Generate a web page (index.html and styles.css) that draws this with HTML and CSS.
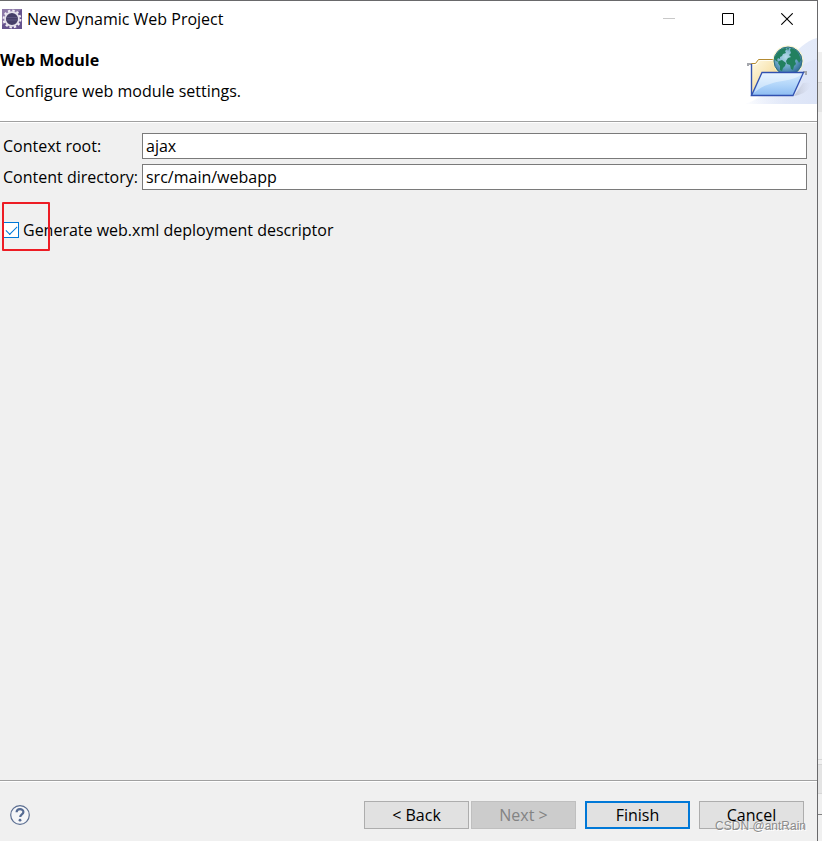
FILE: index.html
```html
<!DOCTYPE html>
<html lang="en">
<head>
<meta charset="utf-8">
<title>New Dynamic Web Project</title>
<link rel="stylesheet" href="styles.css">
</head>
<body>
<form class="dialog">
  <header class="titlebar">
    <svg width="20" height="20" viewBox="0 0 20 20" aria-hidden="true">
      <rect width="20" height="20" fill="#66538e"/>
      <path d="M0 0h20L0 16z" fill="#8d7aa8"/>
      <circle cx="10" cy="10" r="8.400" fill="none" stroke="#f2eff5" stroke-width="2" stroke-dasharray="2.400 2"/>
      <circle cx="10" cy="10" r="6.900" fill="#463f68" stroke="#e6e2ec" stroke-width="1.800"/>
      <path d="M4.500 8.500h11M4.200 11h11.600" stroke="#5d5680"/>
    </svg>
    <h1 class="title">New Dynamic Web Project</h1>
    <div class="controls">
      <button type="button" class="control" aria-label="Minimize" disabled><svg width="12" height="12" viewBox="0 0 12 12"><path d="M0 5.500h12" stroke="#c8c8c8"/></svg></button>
      <button type="button" class="control" aria-label="Maximize"><svg width="12" height="12" viewBox="0 0 12 12"><path d="M.5.5h11v11H.5z" fill="none" stroke="#000"/></svg></button>
      <button type="button" class="control" aria-label="Close"><svg width="12" height="12" viewBox="0 0 12 12"><path d="M.3.3l11.400 11.400M11.700.3L.3 11.700" stroke="#000" stroke-width="1.100"/></svg></button>
    </div>
  </header>
  <section class="banner">
    <div>
      <h2 class="heading">Web Module</h2>
      <p class="message">Configure web module settings.</p>
    </div>
    <svg width="77" height="67" viewBox="0 0 77 67" aria-hidden="true">
      <defs>
        <linearGradient id="haze" x1="0" x2="1"><stop offset="0" stop-color="#e6ecfa" stop-opacity="0"/><stop offset=".6" stop-color="#e6ecfa"/><stop offset="1" stop-color="#e3eaf9"/></linearGradient>
        <linearGradient id="base" x1="0" x2="1"><stop offset="0" stop-color="#dfe6f8" stop-opacity="0"/><stop offset="1" stop-color="#dce4f7"/></linearGradient>
        <linearGradient id="back" x1="0" y1="0" x2="1" y2="1"><stop offset="0" stop-color="#fffbe8"/><stop offset="1" stop-color="#efc96f"/></linearGradient>
        <linearGradient id="front" x1="0" y1="0" x2="0" y2="1"><stop offset="0" stop-color="#d8ecff"/><stop offset=".5" stop-color="#b4d7fa"/><stop offset="1" stop-color="#8dbcf2"/></linearGradient>
        <radialGradient id="sea" cx=".42" cy=".35" r=".65"><stop offset="0" stop-color="#b4dbe8"/><stop offset=".6" stop-color="#69a4c4"/><stop offset="1" stop-color="#2f6b98"/></radialGradient>
        <linearGradient id="shade" x1="0" x2="1"><stop offset="0" stop-color="#a9abb9" stop-opacity=".6"/><stop offset="1" stop-color="#c9cfdf" stop-opacity="0"/></linearGradient>
      </defs>
      <path d="M4 67C34 60 48 8 77 1v66z" fill="url(#haze)"/>
      <path d="M4 67C34 60 50 28 77 22v45z" fill="url(#base)"/>
      <path d="M54 59l9-13q10-2 8 3-5 8-17 10z" fill="url(#shade)"/>
      <path d="M8 29v-2h4M17 38v-2h4M63 35h3v3" fill="none" stroke="#a5a7ad" stroke-width="2"/>
      <path d="M11.500 58V26.500h4l3-4h16l3 4h5v31z" fill="url(#back)" stroke="#b38a31"/>
      <path d="M12.500 27.500h4l3-4h14" fill="none" stroke="#fffdf2"/>
      <path d="M11.500 59V27" stroke="#3454ae" stroke-width="1.400"/>
      <circle cx="48" cy="24" r="15.500" fill="#f6f1bd" opacity=".75"/>
      <circle cx="48" cy="24" r="14" fill="url(#sea)" stroke="#2f6f80"/>
      <path d="M36 18q3-6 9-7l2 1-2 2 1 2-3 1-1 2-2 1 0 2-2-1-1 2 2 2-3-1-2-3zM39 24l3-1 4 3-1 3-2 2-1 3-2-1 0-4-2-3zM51 11q5 1 8 6l2 6-2 3-1-2-2-2-1 2 1 3-2 2-1 4-2-1-1-4-3-1-1-3 2-3 3-1-2-2 2-2-1-3zM47 11l2 0-1 3z" fill="#22805f"/>
      <path d="M11.500 58.500L22 35.500H63.500L53 58.500z" fill="url(#front)" stroke="#3150b0" stroke-width="1.300"/>
      <path d="M14 56l8.500-19.500h39c-7 10-31 4-47.500 19.500z" fill="#fff" opacity=".42"/>
    </svg>
  </section>
  <main class="content">
    <div class="fields">
      <label for="root">Context root:</label>
      <input class="field" id="root" type="text" value="ajax">
      <label for="directory">Content directory:</label>
      <input class="field" id="directory" type="text" value="src/main/webapp">
    </div>
    <div class="option">
      <input class="check" id="descriptor" type="checkbox" checked>
      <label for="descriptor">Generate web.xml deployment descriptor</label>
      <span class="marker"></span>
    </div>
  </main>
  <footer class="footer">
    <button type="button" class="help" aria-label="Help">
      <svg width="20" height="20" viewBox="0 0 20 20"><circle cx="10" cy="10" r="9.300" fill="#f5f6f8" stroke="#5b6e91" stroke-width="1.200"/><path d="M6.600 7.300c0-4.200 6.800-4.200 6.800-.4 0 2.500-3.200 2.500-3.200 5.200" fill="none" stroke="#566b93" stroke-width="2.200"/><circle cx="10" cy="15.200" r="1.400" fill="#566b93"/></svg>
    </button>
    <div class="actions">
      <div class="pair">
        <button type="button" class="button">&lt; Back</button>
        <button type="button" class="button" disabled>Next &gt;</button>
      </div>
      <button type="submit" class="button primary">Finish</button>
      <button type="button" class="button">Cancel</button>
    </div>
    <span class="watermark">CSDN @antRain</span>
  </footer>
</form>
<div class="backdrop"><div class="backdrop-top"></div><div class="backdrop-bottom"></div></div>
</body>
</html>
```

FILE: styles.css
```css
* { box-sizing: border-box; }
body {
  margin: 0;
  min-height: 100vh;
  display: flex;
  background: #fff;
  color: #000;
  font: 16px/20px "Open Sans", "Noto Sans", sans-serif;
}
button, input { font: inherit; color: inherit; }
.dialog {
  flex: 1;
  display: flex;
  flex-direction: column;
  background: #f0f0f0;
  border-top: 1px solid #69696b;
  border-right: 1px solid #69696b;
}
.backdrop {
  display: flex;
  flex-direction: column;
  justify-content: space-between;
  width: 4px;
  background: #f0f0f0;
}
.backdrop-top {
  height: 112px;
  background: linear-gradient(#fff 52px, #f0f0f0 52px, #f0f0f0 82px, #d6d6d6 82px, #d6d6d6 83px, #e4e4e4 83px);
}
.backdrop-bottom {
  height: 82px;
  background: linear-gradient(#d6d6d6 1px, #f0f0f0 1px, #f0f0f0 5px, #d6d6d6 5px, #d6d6d6 6px, #e4e4e4 6px, #e4e4e4 34px, #d6d6d6 34px, #d6d6d6 35px, #f0f0f0 35px, #f0f0f0 55px, #828282 55px, #828282 56px, #f0f0f0 56px);
}
.titlebar {
  display: flex;
  align-items: center;
  height: 36px;
  padding: 0 1px 0 2px;
  background: #fff;
}
.title { flex: 1; margin: 0 0 0 5px; font-size: 16px; font-weight: 400; }
.controls { display: flex; }
.control {
  display: grid;
  place-items: center;
  width: 59px;
  height: 36px;
  padding: 0;
  border: 0;
  background: none;
}
.banner {
  display: flex;
  justify-content: space-between;
  height: 84px;
  background: #fff;
}
.heading { margin: 13px 0 0; font-size: 16px; font-weight: 700; }
.message { margin: 11px 0 0 5px; }
.content {
  flex: 1;
  padding: 11px 10px 0 3px;
  border-top: 1px solid #a0a0a0;
  box-shadow: inset 0 1px #fff;
}
.fields {
  display: grid;
  grid-template-columns: auto 1fr;
  align-items: center;
  gap: 5px 4px;
}
.field {
  width: 100%;
  height: 26px;
  padding: 0 3px;
  border: 1px solid #7a7a7a;
  border-radius: 0;
  background: #fff;
}
.option {
  position: relative;
  display: flex;
  align-items: center;
  gap: 4px;
  margin-top: 30px;
}
.check {
  appearance: none;
  width: 16px;
  height: 16px;
  margin: 0;
  border: 1px solid #0078d7;
  background: #fff;
  display: grid;
  place-items: center;
}
.check:checked::before {
  content: "";
  width: 10px;
  height: 5px;
  margin-bottom: 3px;
  border: solid #0078d7;
  border-width: 0 0 1px 1px;
  transform: rotate(-45deg);
}
.marker {
  position: absolute;
  left: -1px;
  top: -18px;
  width: 48px;
  height: 49px;
  border: 2px solid #ed1c24;
  border-radius: 1px;
  pointer-events: none;
}
.footer {
  position: relative;
  display: flex;
  align-items: center;
  justify-content: space-between;
  padding: 20px 13px 12px 10px;
  border-top: 1px solid #a0a0a0;
  box-shadow: inset 0 1px #fff;
}
.help { display: flex; padding: 0; border: 0; background: none; }
.actions { display: flex; gap: 9px; }
.pair { display: flex; gap: 2px; }
.button {
  width: 105px;
  height: 28px;
  padding: 0;
  border: 1px solid #adadad;
  background: #e1e1e1;
}
.button:disabled { border-color: #bfbfbf; background: #ccc; color: #838383; }
.primary { border: 2px solid #0078d7; }
.watermark {
  position: absolute;
  right: 11px;
  bottom: 6px;
  color: #8c8c8c;
  font: 12px/18px "Liberation Sans", sans-serif;
  text-shadow: 1px 1px #fff;
  pointer-events: none;
}
```
